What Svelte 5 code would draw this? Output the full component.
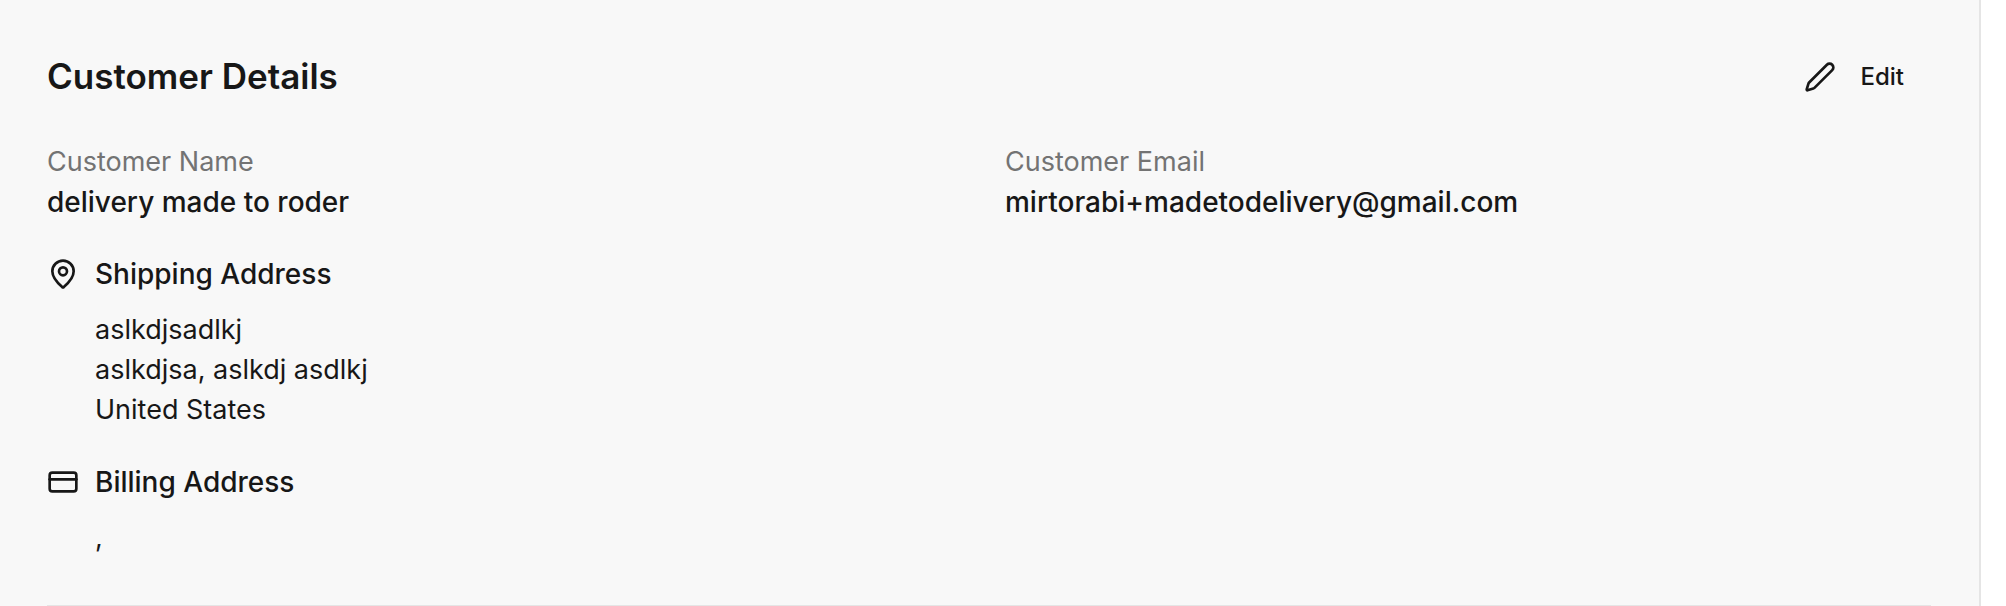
<script>
  const fields = [
    { label: 'Customer Name', value: 'delivery made to roder' },
    { label: 'Customer Email', value: 'mirtorabi+madetodelivery@gmail.com' }
  ];
  const shipping = ['aslkdjsadlkj', 'aslkdjsa, aslkdj asdlkj', 'United States'];
  const billing = [','];
</script>

<main class="panel">
  <section class="customer">
    <header>
      <h2>Customer Details</h2>
      <button type="button">
        <svg class="icon" viewBox="0 0 24 24" aria-hidden="true">
          <path d="M21.174 6.812a1 1 0 0 0-3.986-3.987L3.842 16.174a2 2 0 0 0-.5.83l-1.321 4.352a.5.5 0 0 0 .623.622l4.353-1.32a2 2 0 0 0 .83-.497z" />
        </svg>
        Edit
      </button>
    </header>

    <dl class="fields">
      {#each fields as field}
        <div>
          <dt>{field.label}</dt>
          <dd>{field.value}</dd>
        </div>
      {/each}
    </dl>

    <div class="block">
      <h3>
        <svg class="icon" viewBox="0 0 24 24" aria-hidden="true">
          <path d="M20 10c0 4.993-5.539 10.193-7.399 11.799a1 1 0 0 1-1.202 0C9.539 20.193 4 14.993 4 10a8 8 0 0 1 16 0" />
          <circle cx="12" cy="10" r="3" />
        </svg>
        Shipping Address
      </h3>
      <address>
        {#each shipping as line}<p>{line}</p>{/each}
      </address>
    </div>

    <div class="block">
      <h3>
        <svg class="icon" viewBox="0 0 24 24" aria-hidden="true">
          <rect width="20" height="14" x="2" y="5" rx="2" />
          <path d="M2 10h20" />
        </svg>
        Billing Address
      </h3>
      <address>
        {#each billing as line}<p>{line}</p>{/each}
      </address>
    </div>
  </section>
</main>

<style>
  :global(body) {
    margin: 0;
    background: #fff;
  }

  .panel {
    box-sizing: border-box;
    min-height: 100vh;
    margin-right: 25px;
    padding: 44px 48px 0 47px;
    border-right: 2px solid #e5e5e5;
    background: #f8f8f8;
    color: #171717;
    font: 400 27px/40px Inter, 'Liberation Sans', sans-serif;
  }

  .customer {
    display: flex;
    flex-direction: column;
    gap: 32px;
    padding-bottom: 47px;
    border-bottom: 1px solid #e5e5e5;
  }

  header {
    display: flex;
    align-items: flex-start;
    justify-content: space-between;
  }

  h2,
  h3,
  dl,
  dd,
  p {
    margin: 0;
  }

  h2 {
    font-size: 35px;
    font-weight: 600;
    line-height: 64px;
  }

  button {
    display: flex;
    align-items: center;
    gap: 24px;
    height: 66px;
    padding: 0 27px;
    border: 0;
    border-radius: 12px;
    background: transparent;
    color: inherit;
    font: inherit;
    font-size: 24px;
    font-weight: 500;
    cursor: pointer;
  }

  .icon {
    flex: none;
    width: 32px;
    height: 32px;
    fill: none;
    stroke: currentColor;
    stroke-width: 2;
    stroke-linecap: round;
    stroke-linejoin: round;
  }

  .fields {
    display: grid;
    grid-template-columns: repeat(2, minmax(0, 1fr));
    gap: 32px;
  }

  dt {
    color: #737373;
  }

  dd {
    font-size: 28px;
    font-weight: 500;
    overflow-wrap: anywhere;
  }

  .block {
    display: flex;
    flex-direction: column;
    gap: 16px;
  }

  h3 {
    display: flex;
    align-items: center;
    gap: 16px;
    font-size: 28px;
    font-weight: 500;
  }

  address {
    padding-left: 48px;
    font-style: normal;
  }
</style>
